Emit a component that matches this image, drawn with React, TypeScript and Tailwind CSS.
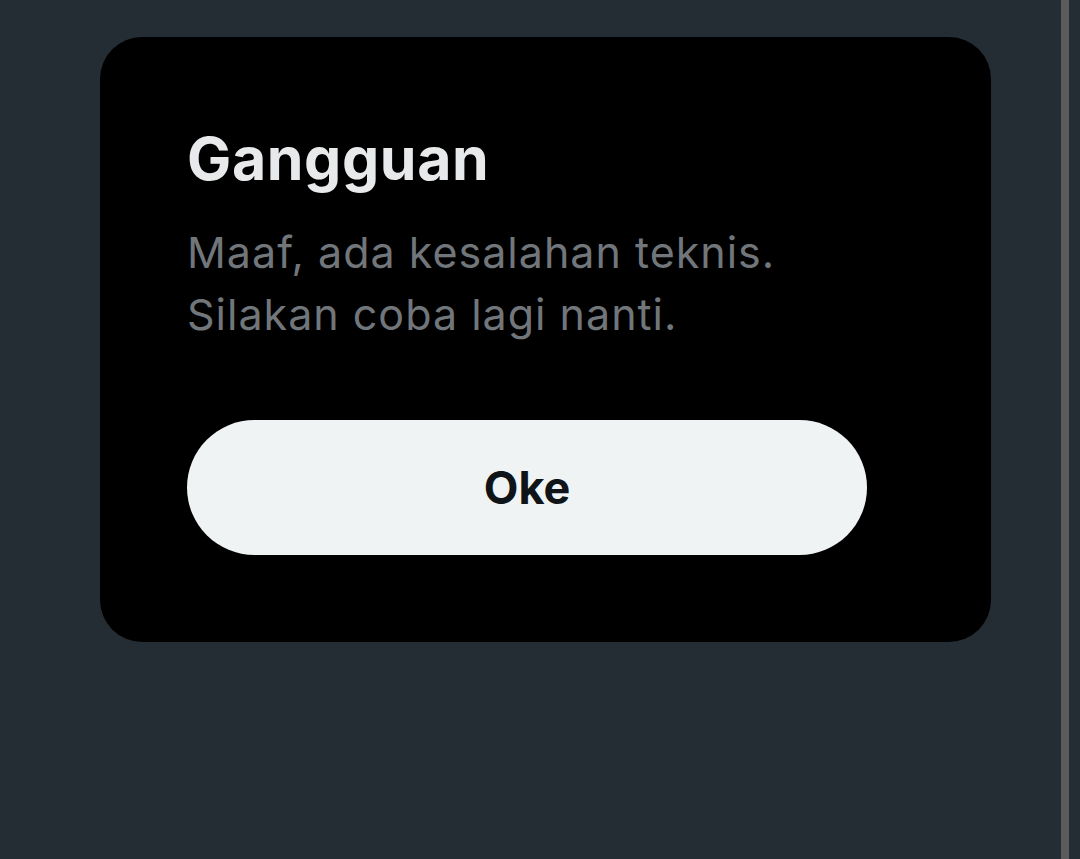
import React from 'react';

const App: React.FC = () => {
  return (
    <div className="w-[1080px] h-[859px] bg-[#242d34] flex overflow-hidden font-['Inter',sans-serif]">
      {/* Dialog column */}
      <div className="flex-1 pl-[100px] pr-[70px] pt-[37px]">
        <div className="bg-black rounded-[42px] pl-[87px] pr-[124px] pt-[86px] pb-[87px]">
          <h1 className="text-[59px] leading-[72px] font-bold text-[#e7e9ea] tracking-[0.6px]">
            Gangguan
          </h1>
          <p className="mt-[26px] text-[43px] leading-[62px] text-[#71767b] tracking-[1px]">
            Maaf, ada kesalahan teknis.
            <br />
            Silakan coba lagi nanti.
          </p>
          <button className="mt-[75px] w-[680px] h-[135px] rounded-full bg-[#eff3f4] text-[#0f1419] text-[45px] font-bold flex items-center justify-center">
            Oke
          </button>
        </div>
      </div>

      {/* Scrollbar strip */}
      <div className="w-[8px] h-full bg-[#5b5b5b]" />
      <div className="w-[12px] h-full" />
    </div>
  );
};

export default App;
